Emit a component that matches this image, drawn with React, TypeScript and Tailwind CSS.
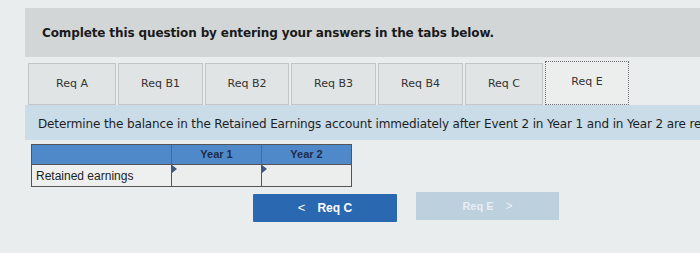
import React from "react";

const tabs = [
  { label: "Req A", w: "w-[88px]" },
  { label: "Req B1", w: "w-[85px]" },
  { label: "Req B2", w: "w-[84px]" },
  { label: "Req B3", w: "w-[85px]" },
  { label: "Req B4", w: "w-[85px]" },
  { label: "Req C", w: "w-[78px]" },
];

export default function App() {
  return (
    <div className="w-[700px] h-[253px] overflow-hidden bg-[#eaeded] pt-[8px] pl-[25px] font-['DejaVu_Sans',sans-serif]">
      <div className="h-[49px] bg-[#d3d6d6] pl-[17px] pt-[16px] text-[12px] font-bold text-[#1a1a1a] tracking-[-0.12px]">
        Complete this question by entering your answers in the tabs below.
      </div>
      <div className="flex items-end gap-[2px] pl-[3px] mt-[4px] h-[44px]">
        {tabs.map((t) => (
          <div
            key={t.label}
            className={`${t.w} h-[42px] bg-[#e1e4e4] border border-[#c2c6c6] flex items-center justify-center text-[11px] text-[#333]`}
          >
            {t.label}
          </div>
        ))}
        <div className="w-[84px] h-[44px] bg-[#eceeee] border border-dotted border-[#6b6f73] flex items-center justify-center pb-[2px] text-[11px] text-[#333]">
          Req E
        </div>
      </div>
      <div className="h-[35px] bg-[#c9dce8] pl-[13px] pt-[10px] text-[12px] text-[#1e1e1e] whitespace-nowrap tracking-[-0.13px]">
        Determine the balance in the Retained Earnings account immediately after Event 2 in Year 1 and in Year 2 are recorded.
      </div>
      <div className="ml-[6px] mt-[4px] w-[321px] border border-[#555] font-['Liberation_Sans',sans-serif]">
        <div className="flex h-[19px] bg-[#5089c9] text-[11px] font-bold text-[#1d2c4c]">
          <div className="w-[140px] border-r border-[#4a6a90]" />
          <div className="w-[90px] border-r border-[#4a6a90] flex items-center justify-center">Year 1</div>
          <div className="flex-1 flex items-center justify-center">Year 2</div>
        </div>
        <div className="flex h-[22px] bg-[#eef0f0] border-t border-[#555] text-[12px] text-[#222]">
          <div className="w-[140px] border-r border-[#555] pl-[4px] flex items-center">Retained earnings</div>
          <div className="relative w-[90px] border-r border-[#555] bg-[#eceeee]">
            <div className="absolute left-0 top-0 w-0 h-0 border-t-[4px] border-b-[4px] border-l-[5px] border-t-transparent border-b-transparent border-l-[#3d5a80]" />
          </div>
          <div className="relative flex-1 bg-[#eceeee]">
            <div className="absolute left-0 top-0 w-0 h-0 border-t-[4px] border-b-[4px] border-l-[5px] border-t-transparent border-b-transparent border-l-[#3d5a80]" />
          </div>
        </div>
      </div>
      <div className="flex items-start mt-[5px] ml-[228px] gap-[19px] font-['Liberation_Sans',sans-serif]">
        <div className="w-[144px] h-[28px] mt-[2px] bg-[#2a68b1] flex items-center justify-center gap-[12px] text-white text-[12px] font-bold rounded-[1px]">
          <span className="text-[13px] font-normal">&lt;</span>
          <span>Req C</span>
        </div>
        <div className="w-[143px] h-[28px] bg-[#bdd0de] flex items-center justify-center gap-[12px] text-[#e7eef4] text-[11px] font-bold">
          <span>Req E</span>
          <span className="text-[12px] font-normal">&gt;</span>
        </div>
      </div>
    </div>
  );
}
